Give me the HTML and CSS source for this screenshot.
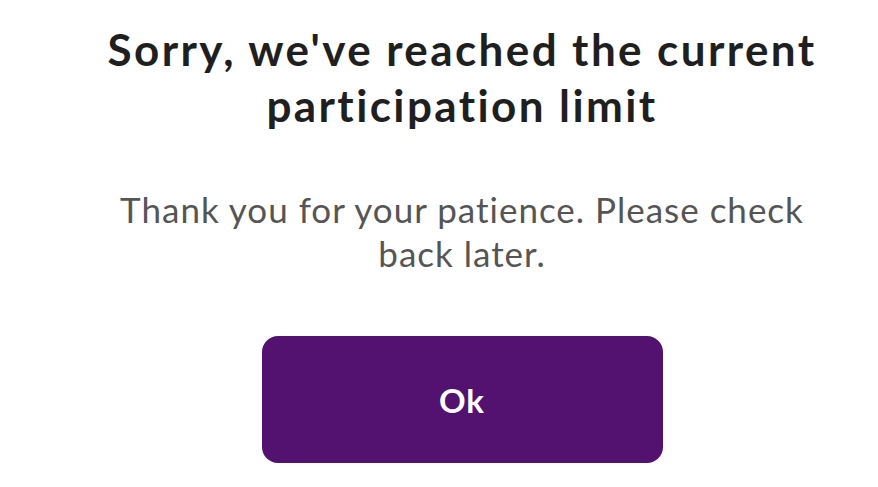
FILE: index.html
```html
<!DOCTYPE html>
<html lang="en">
<head>
    <meta charset="UTF-8">
    <meta name="viewport" content="width=device-width, initial-scale=1.0">
    <title>Participation limit</title>
    <link rel="stylesheet" href="styles.css">
</head>
<body>
    <div class="dialog">
        <h1 class="dialog-title">Sorry, we've reached the current participation limit</h1>
        <p class="dialog-text">Thank you for your patience. Please check back later.</p>
        <button class="ok-button">Ok</button>
    </div>
</body>
</html>
```

FILE: styles.css
```css
body {
    margin: 0;
    background-color: #ffffff;
    font-family: "Lato", "Noto Sans", sans-serif;
}

.dialog {
    display: flex;
    flex-direction: column;
    align-items: center;
    width: 860px;
    margin-left: 32px;
    padding-top: 21px;
}

.dialog-title {
    margin: 0;
    width: 800px;
    font-size: 44px;
    font-weight: 700;
    line-height: 56px;
    letter-spacing: 2.4px;
    color: #1f1f1f;
    text-align: center;
}

.dialog-text {
    margin: 54px 0 0;
    width: 720px;
    font-size: 35px;
    line-height: 44px;
    letter-spacing: 1px;
    color: #555555;
    text-align: center;
}

.ok-button {
    margin-top: 61px;
    width: 401px;
    height: 127px;
    border: none;
    border-radius: 16px;
    background-color: #541270;
    color: #ffffff;
    font-family: inherit;
    font-size: 33px;
    font-weight: 700;
    letter-spacing: 1px;
}
```
